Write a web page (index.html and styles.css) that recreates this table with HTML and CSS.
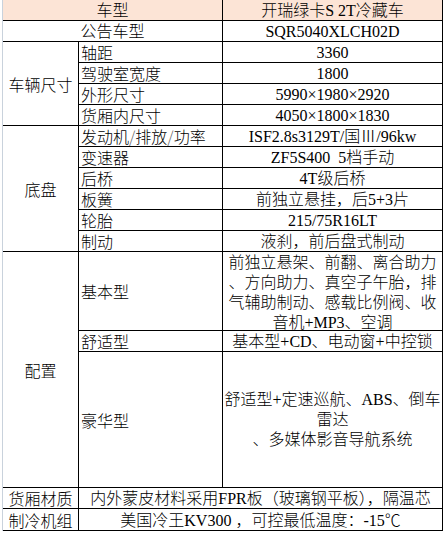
FILE: index.html
```html
<!DOCTYPE html>
<html lang="zh-CN">
<head>
<meta charset="utf-8">
<title>开瑞绿卡S 2T冷藏车</title>
<link rel="stylesheet" href="styles.css">
</head>
<body>
<div class="sheet">
  <div class="cell head span2">车型</div>
  <div class="cell head">开瑞绿卡S 2T冷藏车</div>

  <div class="cell span2">公告车型</div>
  <div class="cell">SQR5040XLCH02D</div>

  <div class="cell group rows4">车辆尺寸</div>
  <div class="cell label">轴距</div>
  <div class="cell">3360</div>
  <div class="cell label">驾驶室宽度</div>
  <div class="cell">1800</div>
  <div class="cell label">外形尺寸</div>
  <div class="cell">5990×1980×2920</div>
  <div class="cell label">货厢内尺寸</div>
  <div class="cell">4050×1800×1830</div>

  <div class="cell group rows6">底盘</div>
  <div class="cell label">发动机<span class="slash">/</span>排放<span class="slash">/</span>功率</div>
  <div class="cell">ISF2.8s3129T/国Ⅲ/96kw</div>
  <div class="cell label">变速器</div>
  <div class="cell">ZF5S400&nbsp; 5档手动</div>
  <div class="cell label">后桥</div>
  <div class="cell">4T级后桥</div>
  <div class="cell label">板簧</div>
  <div class="cell">前独立悬挂，后5+3片</div>
  <div class="cell label">轮胎</div>
  <div class="cell">215/75R16LT</div>
  <div class="cell label">制动</div>
  <div class="cell">液刹，前后盘式制动</div>

  <div class="cell group rows3">配置</div>
  <div class="cell label">基本型</div>
  <div class="cell multi top">前独立悬架、前翻、离合助力<br>、方向助力、真空子午胎，排<br>气辅助制动、感载比例阀、收<br>音机+MP3、空调</div>
  <div class="cell label">舒适型</div>
  <div class="cell">基本型+CD、电动窗+中控锁</div>
  <div class="cell label">豪华型</div>
  <div class="cell multi">舒适型+定速巡航、ABS、倒车<br>雷达<br>、多媒体影音导航系统</div>

  <div class="cell group">货厢材质</div>
  <div class="cell span2">内外蒙皮材料采用FPR板（玻璃钢平板），隔温芯</div>
  <div class="cell group">制冷机组</div>
  <div class="cell span2">美国冷王KV300 ，可控最低温度：-15℃</div>
</div>
</body>
</html>
```

FILE: styles.css
```css
html, body {
  margin: 0;
  padding: 0;
  background: #ffffff;
}

body {
  width: 446px;
  height: 534px;
  overflow: hidden;
  font-family: "Liberation Serif", "Noto Sans CJK SC", serif;
  font-size: 16px;
  font-weight: 300;
  color: #000000;
}

.sheet {
  margin-left: 2px;
  border-left: 1px solid #c9d2dc;
  display: grid;
  grid-template-columns: 76px 144px 220px;
  grid-template-rows: repeat(12, 21px) 79px 21px 136px 21px 22px;
  width: 440px;
}

.cell {
  box-sizing: border-box;
  border-right: 1px solid #000;
  border-bottom: 1px solid #000;
  display: flex;
  align-items: center;
  justify-content: center;
  text-align: center;
  white-space: nowrap;
  line-height: 19px;
  padding-top: 1px;
}

.head {
  background: #fce4d6;
}

.span2 {
  grid-column: span 2;
}

.label {
  justify-content: flex-start;
  text-align: left;
  padding-left: 2px;
  font-family: "Noto Sans CJK SC", sans-serif;
}

.slash {
  color: #666666;
}

.group {
  grid-column: 1;
  font-family: "Noto Sans CJK SC", sans-serif;
}

.rows4 { grid-row: span 4; }
.rows6 { grid-row: span 6; }
.rows3 { grid-row: span 3; }

.multi {
  flex-direction: column;
  line-height: 20px;
}

.top {
  justify-content: flex-start;
  padding-top: 1px;
}
```
